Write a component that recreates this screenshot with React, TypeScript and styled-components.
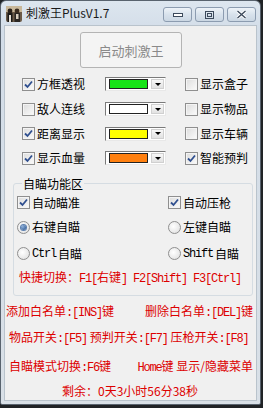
import React from "react";
import styled, { createGlobalStyle } from "styled-components";

const GlobalStyle = createGlobalStyle`
  html, body { margin: 0; padding: 0; background: #202326; }
  body { font-family: "Noto Sans CJK SC", "Noto Sans", sans-serif; font-size: 12px; }
`;

const Window = styled.div`
  width: 261px;
  height: 405px;
  display: flex;
  flex-direction: column;
  box-sizing: border-box;
  background: linear-gradient(#dde6ef, #d3dde8 30px, #d9e0e7);
  border: 1px solid #59636e;
  border-radius: 6px 6px 2px 2px;
`;

const TitleBar = styled.div`
  height: 24px;
  display: flex;
  align-items: flex-start;
  padding: 0 4px 0 5px;
`;

const AppIcon = styled.svg`
  width: 16px;
  height: 16px;
  margin-top: 5px;
  flex: none;
`;

const Title = styled.span`
  margin-left: 4px;
  margin-top: 4px;
  font-size: 12px;
  line-height: 16px;
  color: #1a1a1a;
  flex: 1;
`;

const Captions = styled.div`
  display: flex;
  gap: 3px;
  margin-top: 6px;
`;

const CaptionButton = styled.div`
  width: 29px;
  height: 15px;
  box-sizing: border-box;
  border: 1px solid #8c9cb0;
  border-radius: 3px;
  background: linear-gradient(#eef3f8, #d8e2ec 50%, #cbd7e3);
  display: flex;
  align-items: center;
  justify-content: center;
`;

const Client = styled.div`
  flex: 1;
  margin: 0 3px 3px;
  background: #f0f0f0;
  border: 1px solid #b9c3cc;
  display: flex;
  flex-direction: column;
`;

const StartButton = styled.div`
  align-self: flex-start;
  margin: 6px 0 0 75px;
  width: 102px;
  height: 36px;
  box-sizing: border-box;
  border: 1px solid #b4b4b4;
  border-radius: 3px;
  background: #f4f4f4;
  color: #8a8a8a;
  font-size: 13px;
  display: flex;
  align-items: center;
  justify-content: center;
`;

const OptionsGrid = styled.div`
  display: grid;
  grid-template-columns: 83px 80px auto;
  grid-auto-rows: 24.7px;
  margin: 4px 0 0 17px;
  align-items: center;
`;

const Option = styled.label`
  display: flex;
  align-items: center;
  gap: 2px;
  color: #000;
  font-size: 12px;
  line-height: 14px;
  white-space: nowrap;
`;

const Box = styled.span<{ $checked?: boolean }>`
  width: 13px;
  height: 13px;
  box-sizing: border-box;
  border: 1px solid #8f8f8f;
  background: linear-gradient(135deg, #dcdcdc, #fbfbfb);
  box-shadow: inset 0 0 0 1px #f4f4f4;
  display: inline-flex;
  align-items: center;
  justify-content: center;
  flex: none;
`;

const Dot = styled.span<{ $checked?: boolean }>`
  width: 13px;
  height: 13px;
  box-sizing: border-box;
  border-radius: 50%;
  border: 1px solid #8f8f8f;
  background: radial-gradient(circle at 40% 40%, #ffffff, #dcdcdc);
  display: inline-flex;
  align-items: center;
  justify-content: center;
  flex: none;
  &::after {
    content: "";
    display: ${(p) => (p.$checked ? "block" : "none")};
    width: 5px;
    height: 5px;
    border-radius: 50%;
    background: radial-gradient(circle at 35% 35%, #8fb2dc, #1f4a86);
    box-shadow: 0 0 0 1px #5b7fb0;
  }
`;

const Combo = styled.div`
  width: 61px;
  height: 14px;
  box-sizing: border-box;
  border: 1px solid;
  border-color: #7a7a7a #e8e8e8 #e8e8e8 #7a7a7a;
  background: #fff;
  display: flex;
  align-items: stretch;
  padding: 1px;
  gap: 3px;
`;

const Swatch = styled.span<{ $color: string }>`
  flex: 1;
  margin-left: 2px;
  border: 1px solid #222;
  background: ${(p) => p.$color};
`;

const ArrowBtn = styled.span`
  width: 13px;
  background: linear-gradient(#f8f8f8, #e2e2e2);
  border: 1px solid #d0d0d0;
  box-sizing: border-box;
  display: flex;
  align-items: center;
  justify-content: center;
  &::after {
    content: "";
    border-left: 3px solid transparent;
    border-right: 3px solid transparent;
    border-top: 3px solid #000;
  }
`;

const Group = styled.fieldset`
  margin: 5px 0 0 8px;
  width: 240px;
  height: 120px;
  box-sizing: border-box;
  border: 1px solid #d5dce2;
  border-radius: 3px;
  padding: 0 0 0 3px;
  display: grid;
  grid-template-columns: 151px auto;
  grid-template-rows: 22px 27px 26px 20px;
  align-items: center;
`;

const Legend = styled.legend`
  padding: 0 1px;
  margin-left: 5px;
  font-size: 12px;
  line-height: 16px;
  color: #000;
`;

const Mono = styled.span`
  font-family: "Liberation Mono", monospace;
  letter-spacing: -1.2px;
`;

const Hotkeys = styled.div`
  grid-column: 1 / -1;
  color: #dd0000;
  font-size: 12px;
  margin-left: 2px;
  white-space: nowrap;
`;

const Footer = styled.div`
  display: flex;
  flex-direction: column;
  margin-top: 2px;
  color: #dd0000;
  font-size: 12px;
  white-space: nowrap;
`;

const FooterRow = styled.div<{ $h: number; $pl: number }>`
  height: ${(p) => p.$h}px;
  display: flex;
  align-items: center;
  justify-content: space-between;
  padding: 0 0 0 ${(p) => p.$pl}px;
  width: 248px;
  box-sizing: border-box;
`;

const Remaining = styled.div`
  height: 16px;
  display: flex;
  align-items: center;
  padding-left: 57px;
`;

const Check = () => (
  <svg width="9" height="9" viewBox="0 0 9 9">
    <path d="M1 4.5 L3.5 7 L8 1.5" fill="none" stroke="#2f4f8f" strokeWidth="1.8" />
  </svg>
);

const CheckBox = ({ checked, children }: { checked?: boolean; children: React.ReactNode }) => (
  <Option>
    <Box $checked={checked}>{checked && <Check />}</Box>
    {children}
  </Option>
);

const Radio = ({ checked, children }: { checked?: boolean; children: React.ReactNode }) => (
  <Option>
    <Dot $checked={checked} />
    {children}
  </Option>
);

const ColorCombo = ({ color }: { color: string }) => (
  <Combo>
    <Swatch $color={color} />
    <ArrowBtn />
  </Combo>
);

export default function App() {
  return (
    <>
      <GlobalStyle />
      <Window>
        <TitleBar>
          <AppIcon viewBox="0 0 16 16">
            <rect x="0" y="0" width="16" height="16" rx="2" fill="#6b5a48" />
            <rect x="0" y="0" width="16" height="6" fill="#c9b89a" />
            <circle cx="4" cy="5" r="2.4" fill="#2a211a" />
            <rect x="1.5" y="7" width="5" height="9" fill="#1c1a18" />
            <rect x="3" y="9" width="2" height="7" fill="#e8e2d8" />
            <circle cx="11" cy="5" r="2.4" fill="#3a2c20" />
            <rect x="8.5" y="7" width="5.5" height="9" fill="#2b2622" />
            <rect x="10" y="8" width="2.5" height="5" fill="#d7cdbd" />
          </AppIcon>
          <Title>刺激王PlusV1.7</Title>
          <Captions>
            <CaptionButton>
              <svg width="10" height="6" viewBox="0 0 10 6">
                <rect x="0.5" y="1.5" width="9" height="3" fill="#fff" stroke="#3c4a5c" />
              </svg>
            </CaptionButton>
            <CaptionButton>
              <svg width="9" height="8" viewBox="0 0 9 8">
                <rect x="0.5" y="0.5" width="8" height="7" fill="none" stroke="#3c4a5c" />
                <rect x="2.5" y="2.5" width="4" height="3" fill="none" stroke="#3c4a5c" />
              </svg>
            </CaptionButton>
            <CaptionButton>
              <svg width="11" height="9" viewBox="0 0 11 9">
                <path d="M1.5 1 L9.5 8 M9.5 1 L1.5 8" stroke="#fff" strokeWidth="3.2" />
                <path d="M1.5 1 L9.5 8 M9.5 1 L1.5 8" stroke="#3c4a5c" strokeWidth="1.4" />
              </svg>
            </CaptionButton>
          </Captions>
        </TitleBar>
        <Client>
          <StartButton>启动刺激王</StartButton>
          <OptionsGrid>
            <CheckBox checked>方框透视</CheckBox>
            <ColorCombo color="#16e316" />
            <CheckBox>显示盒子</CheckBox>
            <CheckBox>敌人连线</CheckBox>
            <ColorCombo color="#ffffff" />
            <CheckBox>显示物品</CheckBox>
            <CheckBox checked>距离显示</CheckBox>
            <ColorCombo color="#ffff00" />
            <CheckBox>显示车辆</CheckBox>
            <CheckBox checked>显示血量</CheckBox>
            <ColorCombo color="#ff8010" />
            <CheckBox checked>智能预判</CheckBox>
          </OptionsGrid>
          <Group>
            <Legend>自瞄功能区</Legend>
            <CheckBox checked>自动瞄准</CheckBox>
            <CheckBox checked>自动压枪</CheckBox>
            <Radio checked>右键自瞄</Radio>
            <Radio>左键自瞄</Radio>
            <Radio><Mono>Ctrl</Mono>自瞄</Radio>
            <Radio><Mono>Shift</Mono>自瞄</Radio>
            <Hotkeys>
              快捷切换：<Mono>F1[</Mono>右键<Mono>] F2[Shift] F3[Ctrl]</Mono>
            </Hotkeys>
          </Group>
          <Footer>
            <FooterRow $h={26} $pl={1}>
              <span>添加白名单<Mono>:[INS]</Mono>键</span>
              <span>删除白名单<Mono>:[DEL]</Mono>键</span>
            </FooterRow>
            <FooterRow $h={26} $pl={4}>
              <span>物品开关<Mono>:[F5]</Mono> 预判开关<Mono>:[F7]</Mono> 压枪开关<Mono>:[F8]</Mono></span>
            </FooterRow>
            <FooterRow $h={33} $pl={4}>
              <span>自瞄模式切换<Mono>:F6</Mono>键</span>
              <span><Mono>Home</Mono>键 显示/隐藏菜单</span>
            </FooterRow>
            <Remaining>剩余：0天3小时56分38秒</Remaining>
          </Footer>
        </Client>
      </Window>
    </>
  );
}
